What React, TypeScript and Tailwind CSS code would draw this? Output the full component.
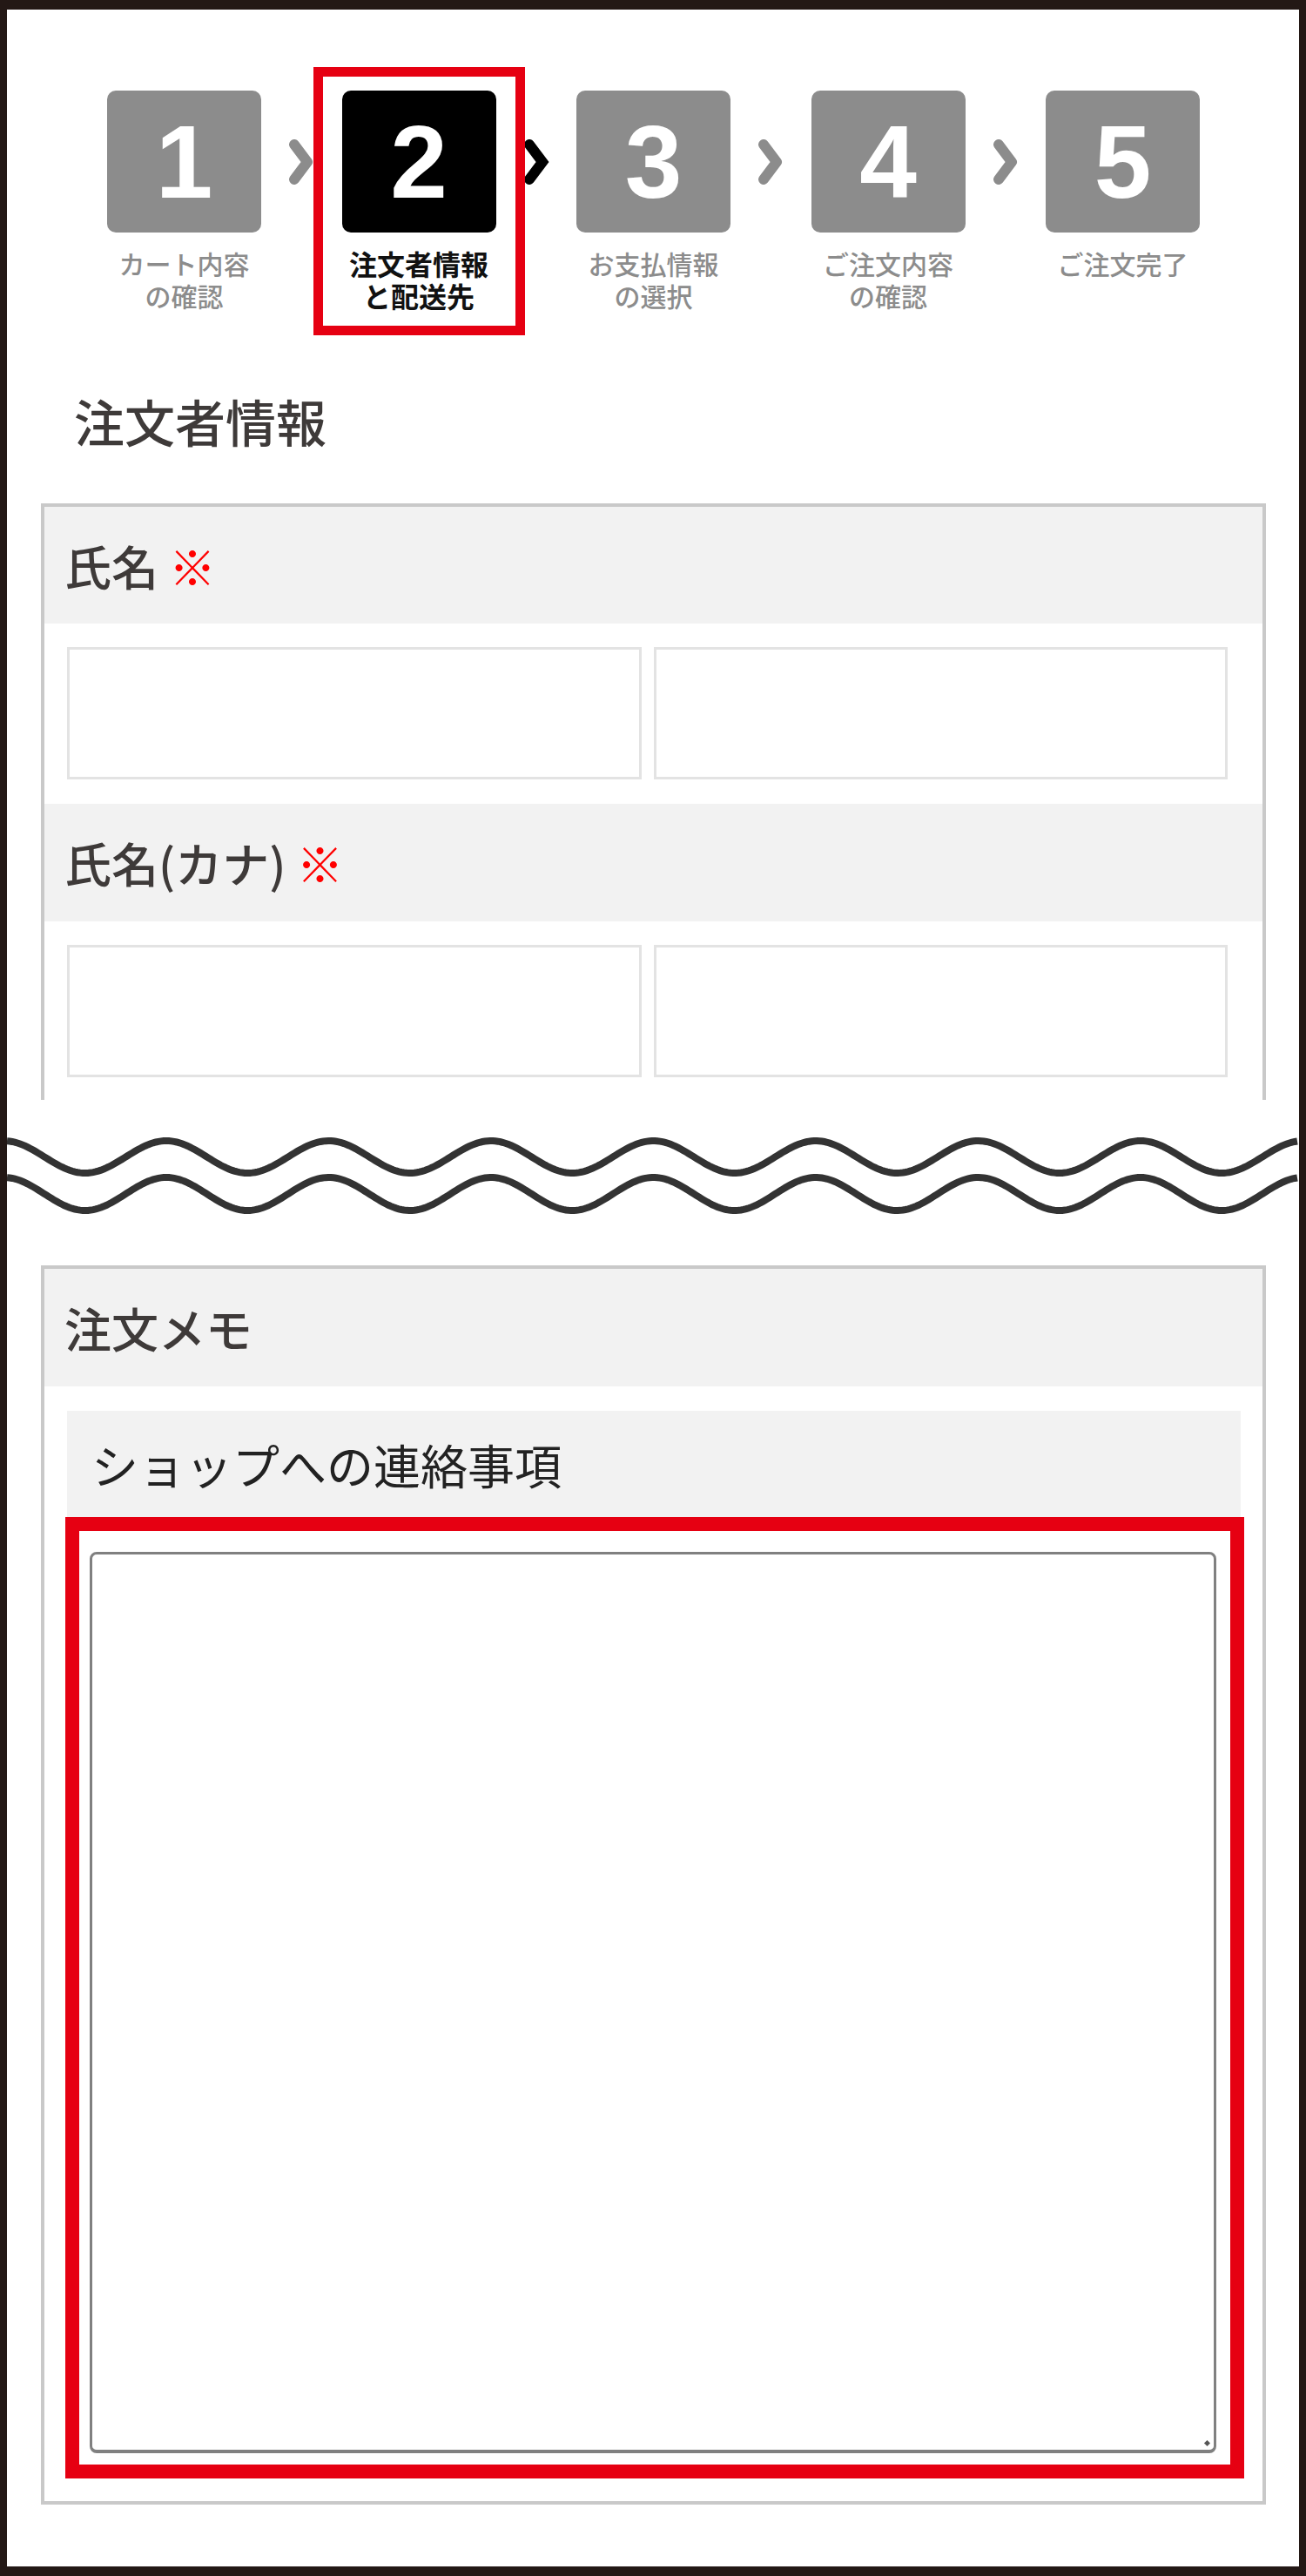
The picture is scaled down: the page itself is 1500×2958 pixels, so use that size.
const jp = "font-['Noto_Sans_CJK_JP','Noto_Sans',sans-serif]"

const steps = [
  { num: '1', label: ['カート内容', 'の確認'] },
  { num: '2', label: ['注文者情報', 'と配送先'] },
  { num: '3', label: ['お支払情報', 'の選択'] },
  { num: '4', label: ['ご注文内容', 'の確認'] },
  { num: '5', label: ['ご注文完了'] },
]
const current = 1

// sine line across the break band, x in px from the left edge
function wavePath(cy: number, amp: number, period: number, x0: number, width: number) {
  const pts: string[] = []
  for (let x = 0; x <= width; x += 3) {
    const y = cy - amp * Math.cos((2 * Math.PI * (x - x0)) / period)
    pts.push(`${x},${y.toFixed(2)}`)
  }
  return 'M' + pts.join(' L')
}

function Chevron({ dark }: { dark: boolean }) {
  return (
    <svg width="30" height="56" viewBox="0 0 30 56">
      <polyline
        points="7,8 22,28 7,48"
        fill="none"
        stroke={dark ? '#000000' : '#8c8c8c'}
        strokeWidth="12"
        strokeLinecap="round"
        strokeLinejoin={dark ? 'miter' : 'round'}
      />
    </svg>
  )
}

function Stepper() {
  return (
    <div className="h-[443px] pt-[93px] pl-[115px]">
      <div className="flex items-start">
        {steps.map((s, i) => {
          const active = i === current
          return (
            <div key={s.num} className="flex items-start">
              {i > 0 && (
                <div className="flex h-[163px] w-[92.5px] items-center justify-center">
                  <Chevron dark={i === current + 1} />
                </div>
              )}
              <div className="relative flex w-[177px] flex-col items-center">
                <div
                  className={`flex h-[163px] w-[177px] items-center justify-center rounded-[10px] ${
                    active ? 'bg-black' : 'bg-[#8c8c8c]'
                  }`}
                >
                  <span className="font-['Liberation_Sans',Arial,sans-serif] text-[118px] leading-none font-bold text-white">
                    {s.num}
                  </span>
                </div>
                <p
                  className={`${jp} mt-[17px] text-center leading-[37px] whitespace-nowrap ${
                    active ? 'text-[32px] font-bold text-[#111]' : 'text-[30px] font-medium text-[#8c8c8c]'
                  }`}
                >
                  {s.label[0]}
                  {s.label[1] && (
                    <>
                      <br />
                      {s.label[1]}
                    </>
                  )}
                </p>
                {active && (
                  <div className="absolute top-[-27px] left-[-33px] z-10 h-[308px] w-[243px] border-[11px] border-[#e60012]" />
                )}
              </div>
            </div>
          )
        })}
      </div>
    </div>
  )
}

function FieldHeader({ label, required }: { label: string; required?: boolean }) {
  return (
    <div className={`${jp} flex h-full items-center bg-[#f2f2f2] pl-[23px] text-[54px] font-medium text-[#3e3a39]`}>
      <span>{label}</span>
      {required && <span className="font-normal text-[#ff0000]">&nbsp;※</span>}
    </div>
  )
}

function NameInputs() {
  return (
    <div className="flex gap-[14px] pt-[27px] pb-[28px] pl-[26px]">
      <input className="h-[152px] w-[660px] border-[3px] border-[#e3e3e3] bg-white outline-none" />
      <input className="h-[152px] w-[659px] border-[3px] border-[#e3e3e3] bg-white outline-none" />
    </div>
  )
}

export default function App() {
  return (
    <div className="h-[2958px] w-[1500px] border-x-[8px] border-y-[11px] border-[#231815] bg-white">
      <Stepper />

      <h2 className={`${jp} h-[56px] pl-[77px] text-[58px] leading-none font-medium text-[#3e3a39]`}>注文者情報</h2>

      {/* customer block, cut off below the kana row */}
      <div className="mt-[68px] ml-[39px] h-[685px] w-[1407px] overflow-hidden border-x-[4px] border-t-[4px] border-[#c9c9c9]">
        <div className="h-[134px]">
          <FieldHeader label="氏名" required />
        </div>
        <NameInputs />
        <div className="h-[135px]">
          <FieldHeader label="氏名(カナ)" required />
        </div>
        <NameInputs />
      </div>

      <div className="h-[190px]">
        <svg width="1484" height="190" viewBox="0 0 1484 190" className="block">
          <path d={wavePath(65.5, 18.5, 186.5, 183, 1484)} fill="none" stroke="#333333" strokeWidth="8" />
          <path d={wavePath(108, 19, 186.5, 183, 1484)} fill="none" stroke="#333333" strokeWidth="8" />
        </svg>
      </div>

      {/* order memo */}
      <div className="ml-[39px] w-[1407px] border-[4px] border-[#c9c9c9] pb-[26px]">
        <div className="h-[135px]">
          <FieldHeader label="注文メモ" />
        </div>
        <div
          className={`${jp} mt-[28px] ml-[26px] flex h-[122px] w-[1348px] items-center bg-[#f2f2f2] pl-[28px] text-[54px] text-[#222]`}
        >
          ショップへの連絡事項
        </div>
        <div className="ml-[24px] h-[1104px] w-[1354px] border-[16px] border-[#e60012] bg-white">
          <div className="relative mt-[24px] ml-[12px] h-[1035px] w-[1294px]">
            <textarea className="block h-full w-full resize-none rounded-[8px] border-[3px] border-b-[4px] border-[#808080] bg-white outline-none" />
            <span className="absolute right-[8px] bottom-[9px] h-[5px] w-[5px] rotate-45 bg-[#555]" />
          </div>
        </div>
      </div>
    </div>
  )
}
